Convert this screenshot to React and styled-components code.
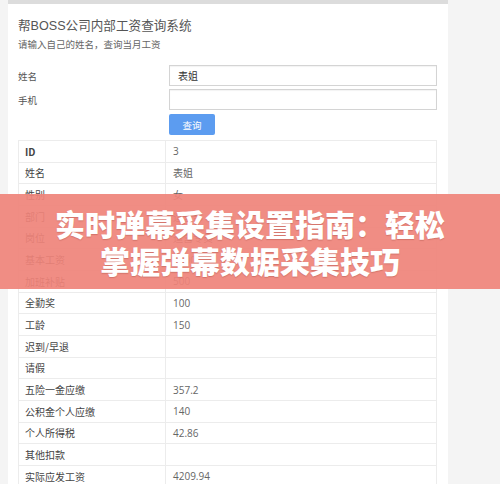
import React from "react";
import styled, { createGlobalStyle } from "styled-components";

const Global = createGlobalStyle`
  html, body { margin: 0; padding: 0; }
  body {
    background: #f4f4f4;
    font-family: "Liberation Sans", "Noto Sans CJK SC", sans-serif;
    width: 500px;
    height: 484px;
    overflow: hidden;
  }
`;

const Page = styled.div`
  position: relative;
  display: flex;
  width: 500px;
  height: 484px;
  overflow: hidden;
  background: #f4f4f4;
`;

const Panel = styled.div`
  margin-left: 8px;
  width: 440px;
  box-sizing: border-box;
  background: #fff;
  border-top: 4px solid #dcdcdc;
  padding: 12px 11px 0 10px;
  display: flex;
  flex-direction: column;
`;

const Title = styled.div`
  font-size: 12.6px;
  line-height: 20px;
  color: #555;
  font-family: "Liberation Sans", "Noto Sans CJK SC", sans-serif;
`;

const Sub = styled.div`
  font-size: 9.5px;
  line-height: 16px;
  color: #666;
  font-family: "Noto Sans CJK SC", sans-serif;
`;

const Form = styled.div`
  margin-top: 13px;
  display: flex;
  flex-direction: column;
  gap: 3px;
`;

const FormRow = styled.div`
  display: grid;
  grid-template-columns: 151px 1fr;
  align-items: center;
`;

const Label = styled.span`
  font-size: 9.5px;
  color: #555;
  font-family: "Noto Sans CJK SC", sans-serif;
`;

const Input = styled.div`
  height: 21px;
  box-sizing: border-box;
  border: 1px solid #d4d4d4;
  box-shadow: inset 0 1px 1px rgba(0,0,0,0.05);
  padding-left: 8px;
  display: flex;
  align-items: center;
  font-size: 10px;
  color: #333;
  font-family: "Noto Sans CJK SC", sans-serif;
`;

const Button = styled.div`
  width: 46px;
  height: 21px;
  background: #5c9cf0;
  color: #fff;
  font-size: 9.5px;
  border-radius: 2px;
  display: flex;
  align-items: center;
  justify-content: center;
  font-family: "Noto Sans CJK SC", sans-serif;
  margin-top: 1px;
`;

const Table = styled.div`
  margin-top: 5px;
  border: 1px solid #ececec;
  border-bottom: none;
  display: flex;
  flex-direction: column;
`;

const Row = styled.div`
  display: grid;
  grid-template-columns: 146px 1fr;
  height: 21.67px;
  box-sizing: border-box;
  border-bottom: 1px solid #ececec;
`;

const Cell = styled.div`
  display: flex;
  align-items: center;
  padding-left: ${p => (p.$value ? 7 : 6)}px;
  border-left: ${p => (p.$value ? "1px solid #ececec" : "none")};
  font-size: 10px;
  color: ${p => (p.$value ? "#666" : "#444")};
  font-weight: ${p => (p.$bold ? 700 : 400)};
  font-family: ${p => (p.$value ? '"Open Sans", "Noto Sans CJK SC", sans-serif' : '"Noto Sans CJK SC", sans-serif')};
`;

const Banner = styled.div`
  position: absolute;
  left: 0;
  top: 194px;
  width: 500px;
  height: 95px;
  background: rgba(239, 131, 121, 0.92);
  display: flex;
  flex-direction: column;
  align-items: center;
  justify-content: center;
`;

const BannerLine = styled.div`
  font-family: "Noto Sans CJK SC", sans-serif;
  font-weight: 900;
  font-size: 30px;
  line-height: 37px;
  color: #fff;
  white-space: nowrap;
  text-shadow: 0 1px 1px rgba(120, 40, 30, 0.25);
`;

const rows = [
  ["ID", "3", true],
  ["姓名", "表姐"],
  ["性别", "女"],
  ["部门", "运营部"],
  ["岗位", "运营专员"],
  ["基本工资", "4000"],
  ["加班补贴", "500"],
  ["全勤奖", "100"],
  ["工龄", "150"],
  ["迟到/早退", ""],
  ["请假", ""],
  ["五险一金应缴", "357.2"],
  ["公积金个人应缴", "140"],
  ["个人所得税", "42.86"],
  ["其他扣款", ""],
  ["实际应发工资", "4209.94"],
];

export default function App() {
  return (
    <>
      <Global />
      <Page>
        <Panel>
          <Title>帮BOSS公司内部工资查询系统</Title>
          <Sub>请输入自己的姓名，查询当月工资</Sub>
          <Form>
            <FormRow>
              <Label>姓名</Label>
              <Input>表姐</Input>
            </FormRow>
            <FormRow>
              <Label>手机</Label>
              <Input />
            </FormRow>
            <FormRow>
              <span />
              <Button>查询</Button>
            </FormRow>
          </Form>
          <Table>
            {rows.map(([k, v, b]) => (
              <Row key={k}>
                <Cell $bold={b}>{k}</Cell>
                <Cell $value>{v}</Cell>
              </Row>
            ))}
          </Table>
        </Panel>
        <Banner>
          <BannerLine>实时弹幕采集设置指南：轻松</BannerLine>
          <BannerLine>掌握弹幕数据采集技巧</BannerLine>
        </Banner>
      </Page>
    </>
  );
}
